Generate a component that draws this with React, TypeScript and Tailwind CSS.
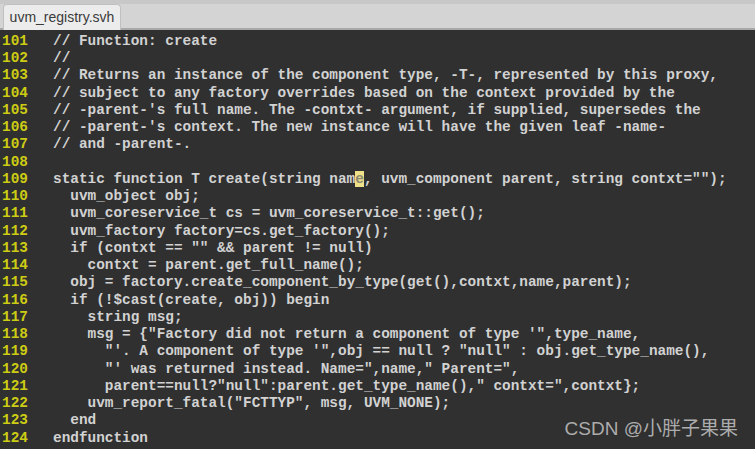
const lines: { n: number; indent: number; text: string }[] = [
  { n: 101, indent: 0, text: "// Function: create" },
  { n: 102, indent: 0, text: "//" },
  { n: 103, indent: 0, text: "// Returns an instance of the component type, -T-, represented by this proxy," },
  { n: 104, indent: 0, text: "// subject to any factory overrides based on the context provided by the" },
  { n: 105, indent: 0, text: "// -parent-'s full name. The -contxt- argument, if supplied, supersedes the" },
  { n: 106, indent: 0, text: "// -parent-'s context. The new instance will have the given leaf -name-" },
  { n: 107, indent: 0, text: "// and -parent-." },
  { n: 108, indent: 0, text: "" },
  { n: 109, indent: 0, text: "" },
  { n: 110, indent: 2, text: "uvm_object obj;" },
  { n: 111, indent: 2, text: "uvm_coreservice_t cs = uvm_coreservice_t::get();" },
  { n: 112, indent: 2, text: "uvm_factory factory=cs.get_factory();" },
  { n: 113, indent: 2, text: 'if (contxt == "" && parent != null)' },
  { n: 114, indent: 4, text: "contxt = parent.get_full_name();" },
  { n: 115, indent: 2, text: "obj = factory.create_component_by_type(get(),contxt,name,parent);" },
  { n: 116, indent: 2, text: "if (!$cast(create, obj)) begin" },
  { n: 117, indent: 4, text: "string msg;" },
  { n: 118, indent: 4, text: 'msg = {"Factory did not return a component of type \'",type_name,' },
  { n: 119, indent: 6, text: '"\'. A component of type \'",obj == null ? "null" : obj.get_type_name(),' },
  { n: 120, indent: 6, text: '"\' was returned instead. Name=",name," Parent=",' },
  { n: 121, indent: 6, text: 'parent==null?"null":parent.get_type_name()," contxt=",contxt};' },
  { n: 122, indent: 4, text: 'uvm_report_fatal("FCTTYP", msg, UVM_NONE);' },
  { n: 123, indent: 2, text: "end" },
  { n: 124, indent: 0, text: "endfunction" },
];

const CodeLine = ({ n, indent, text }: { n: number; indent: number; text: string }) => {
  return (
    <div className="flex h-[17.26px] items-center whitespace-pre">
      <span className="w-[53px] shrink-0 pl-[2px] text-[#cccc14]">{n}</span>
      <span className="text-[#d2d2d2]">
        {" ".repeat(indent)}
        {n === 109 ? (
          <>
            static function T create(string nam
            <span className="bg-[#efe08a] text-[#8c8a70]">e</span>
            , uvm_component parent, string contxt="");
          </>
        ) : (
          text
        )}
      </span>
    </div>
  )
}

const App = () => {
  return (
    <div className="relative w-[755px] h-[449px] overflow-hidden bg-[#303030]">
      <div className="w-full h-[30px] bg-[#d4d4d4] border-t-[4px] border-t-[#c8c8c8] border-b-[2px] border-b-[#a8a8a8] flex items-end pl-[3px]">
        <div className="h-[26px] w-[118px] -mb-[2px] rounded-t-[4px] bg-[#ececec] border border-b-0 border-[#c0c0c0] flex items-center justify-center">
          <span className="text-[14px] text-[#3a3a3a]" style={{ fontFamily: '"Liberation Sans", Arial, sans-serif' }}>
            uvm_registry.svh
          </span>
        </div>
      </div>
      <div
        className="pt-[3px] text-[14.4px] font-bold"
        style={{ fontFamily: '"Liberation Mono", "Courier New", monospace' }}
      >
        {lines.map((l) => (
          <CodeLine key={l.n} {...l} />
        ))}
      </div>
      <div
        className="absolute right-[17px] bottom-[6px] text-[19px] text-[#c4c4c4]/85"
        style={{ fontFamily: '"Liberation Sans", "Noto Sans CJK SC", sans-serif' }}
      >
        CSDN @小胖子果果
      </div>
    </div>
  )
}

export default App;
